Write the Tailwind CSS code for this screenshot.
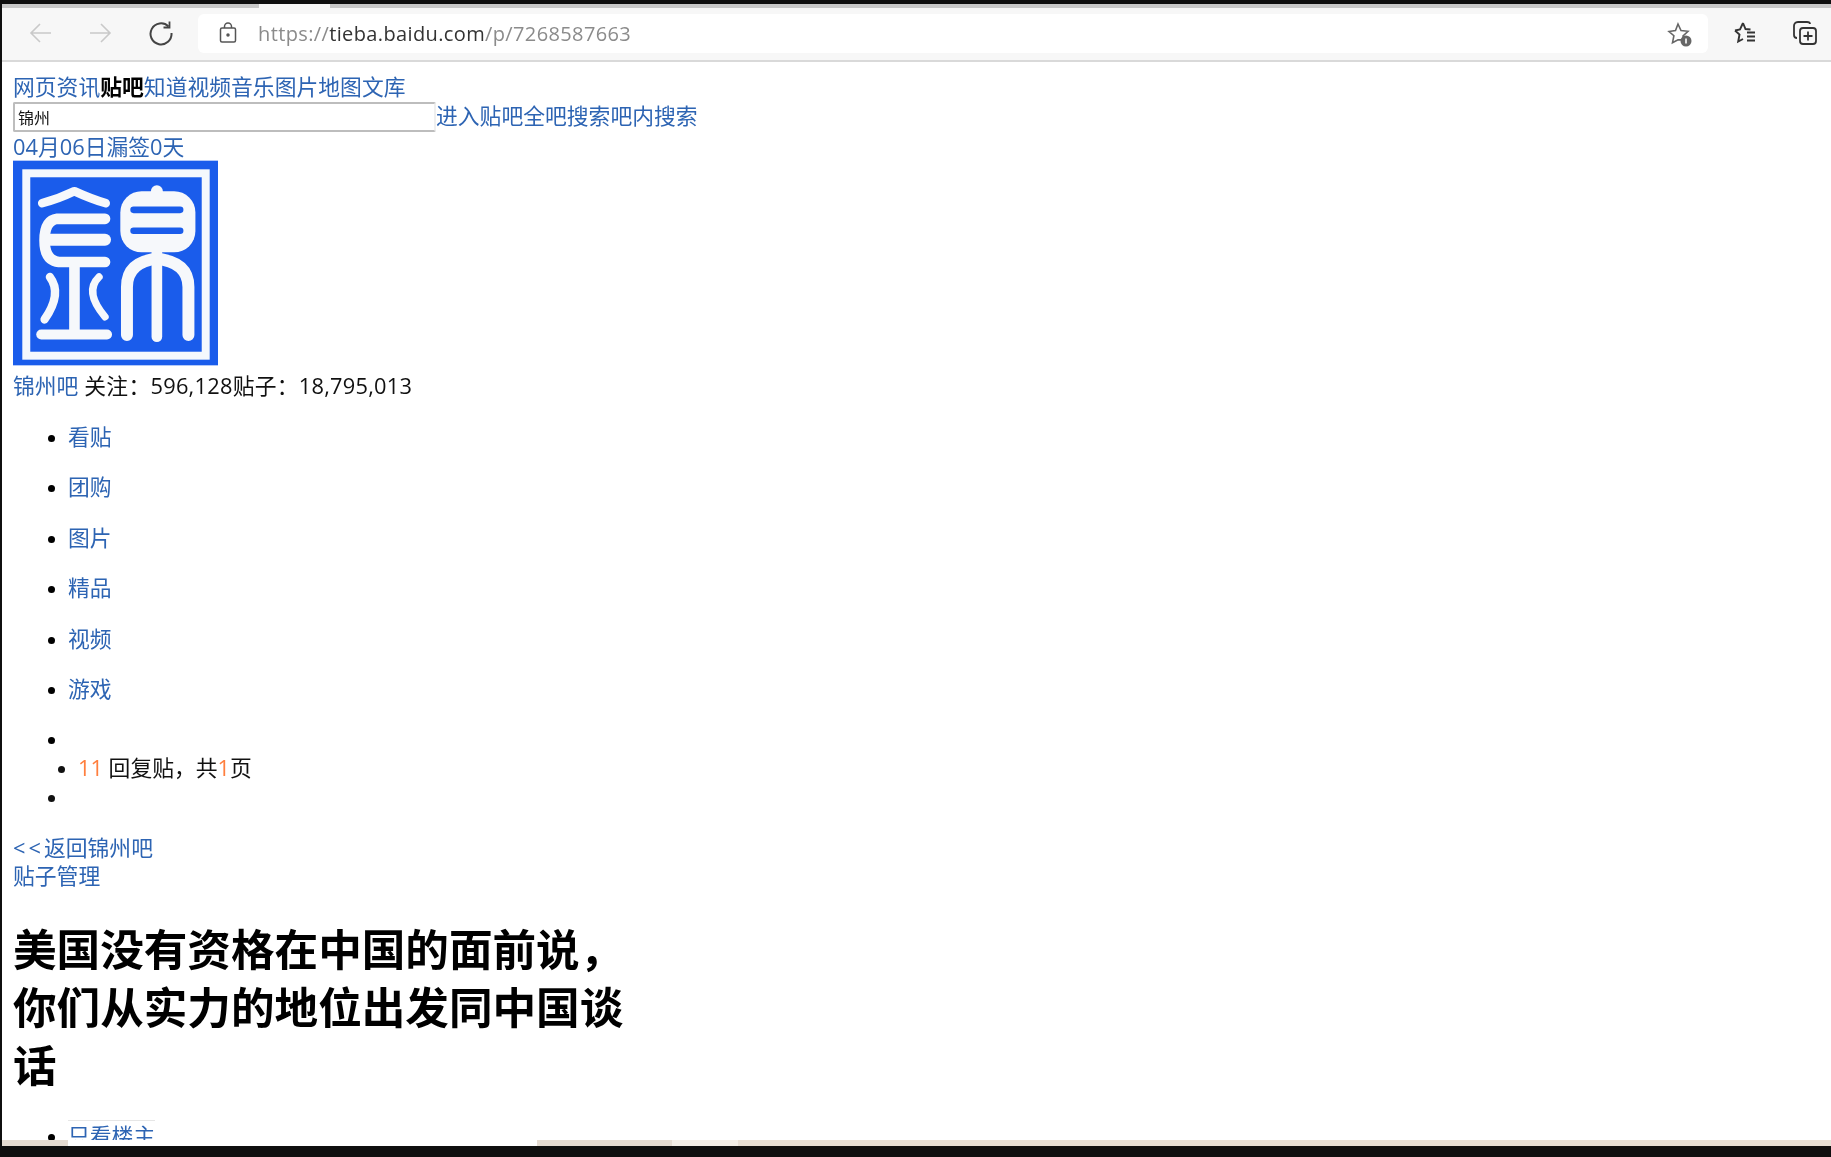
<!DOCTYPE html>
<html lang="zh-CN">
<head>
  <meta charset="UTF-8">
  <meta name="viewport" content="width=device-width, initial-scale=1.0">
  <title>锦州吧</title>
  <script src="https://cdn.jsdelivr.net/npm/@tailwindcss/browser@4"></script>
</head>
<body class="h-screen overflow-hidden bg-white flex flex-col border-l-2 border-[#0f0f0f] font-['Open_Sans','Noto_Sans_CJK_SC',sans-serif] text-[21.8px] leading-[29px] text-[#111] blur-[0.4px]">

  <!-- browser chrome -->
  <div class="h-1 bg-[#0f0f0f] shrink-0"></div>
  <div class="h-1 bg-[#c8c8c8] shrink-0 pl-[257px]"><div class="w-[71px] h-1 bg-[#f7f7f7]"></div></div>
  <div class="h-[54px] shrink-0 bg-[#f7f7f7] border-b-2 border-[#d9d9d9] flex items-center pb-[2px]">
    <div class="w-[196px] flex items-center shrink-0">
      <svg class="ml-[27px]" width="24" height="24" viewBox="0 0 24 24" fill="none" stroke="#c9c9c9" stroke-width="1.6"><path d="M22 12H2M11 3l-9 9 9 9"/></svg>
      <svg class="ml-[35px]" width="24" height="24" viewBox="0 0 24 24" fill="none" stroke="#c9c9c9" stroke-width="1.6"><path d="M2 12h20M13 3l9 9-9 9"/></svg>
      <svg class="ml-[36px]" width="26" height="26" viewBox="0 0 26 26" fill="none" stroke="#444" stroke-width="2"><path d="M20.500 6.500A10.500 10.500 0 1 0 23.500 13"/><path d="M21.500 1.500v6h-6" stroke-width="1.800"/></svg>
    </div>
    <div class="flex-1 h-[39px] bg-white rounded-md flex items-center relative">
      <svg class="ml-[20px]" width="20" height="22" viewBox="0 0 20 22" fill="none" stroke="#555" stroke-width="1.500"><rect x="2.500" y="6" width="15" height="14" rx="1.500"/><path d="M6.500 6V4.500a3.500 3.500 0 0 1 7 0V6"/><circle cx="10" cy="13" r="1" fill="#555"/></svg>
      <span class="ml-[20px] font-['Open_Sans',sans-serif] text-[20px] text-[#8b8b8b] tracking-[0.37px]">https://<span class="text-[#333]">tieba.baidu.com</span>/p/7268587663</span>
      <svg class="absolute right-[14px] top-[7px]" width="28" height="28" viewBox="0 0 28 28" fill="none" stroke="#666" stroke-width="1.600"><path d="M12 3l3 6.500 7 .8-5 4.600 1 4-6-.2-5.500 3 1.400-7L3 10.500l6.500-1z"/><circle cx="20" cy="20" r="5.500" fill="#666" stroke="none"/><path d="M20 17.500v5" stroke="#fff"/></svg>
    </div>
    <div class="w-[123px] flex items-center shrink-0">
      <svg class="ml-[24px]" width="26" height="26" viewBox="0 0 26 26" fill="none" stroke="#333" stroke-width="1.900"><path d="M11 3l2.500 6 5 .5M3 10.500l5-1L11 3M3 10.500l4.500 4-1.300 7L11 19"/><path d="M15 12.500h8M15 16.500h8M15 20.500h8"/></svg>
      <svg class="ml-[34px]" width="26" height="26" viewBox="0 0 26 26" fill="none" stroke="#333" stroke-width="1.800"><path d="M5 18c-2 0-3-1-3-3V6c0-2 1-4 4-4h9c2 0 3 1 3 2"/><rect x="8" y="8" width="16" height="16" rx="3"/><path d="M16 11.500v9M11.500 16h9"/></svg>
    </div>
  </div>

  <!-- page content -->
  <main class="flex-1 min-h-0 overflow-hidden pl-[11px] pt-[10px]">
    <div class="text-[#2d64b3] h-[30px]"><a href="#">网页</a><a href="#">资讯</a><b class="font-bold text-black">贴吧</b><a href="#">知道</a><a href="#">视频</a><a href="#">音乐</a><a href="#">图片</a><a href="#">地图</a><a href="#">文库</a></div>
    <div class="flex items-start h-[30px] text-[#2d64b3] leading-[27px]">
      <input value="锦州" class="w-[423px] h-[30px] px-[3px] text-[16px] text-[#111] bg-white border-2 border-[#bdbdbd] border-r-[#efefef] rounded-[2px]">
      <a href="#">进入贴吧</a><a href="#">全吧搜索</a><a href="#">吧内搜索</a>
    </div>
    <div class="text-[#2d64b3] h-[28px] leading-[29px]"><a href="#">04月06日漏签0天</a></div>

    <svg class="block" width="205" height="206" viewBox="37 30 617 616">
      <rect x="37" y="30" width="617" height="616" fill="#1a5ceb"/>
      <rect x="77" y="68" width="540" height="549" fill="none" stroke="#f4f8fd" stroke-width="24"/>
      <g fill="none" stroke="#f6f8fb" stroke-linecap="round" stroke-linejoin="round">
        <path d="M125 158Q175 145 222 122Q272 145 316 158" stroke-width="26"/>
        <path d="M314 205H170Q132 210 132 270Q132 330 175 335H314" stroke-width="32"/>
        <path d="M150 268H314" stroke-width="36"/>
        <path d="M222 340V550" stroke-width="32"/>
        <path d="M122 553H320" stroke-width="30"/>
        <path d="M148 380Q186 430 132 508" stroke-width="25"/>
        <path d="M296 380Q250 425 314 500" stroke-width="22"/>
        <path d="M380 555V410Q380 335 470 325Q565 335 565 410V555" stroke-width="36"/>
        <path d="M470 290V560" stroke-width="32"/>
      </g>
      <rect x="360" y="122" width="226" height="184" rx="64" fill="#f6f8fb"/>
      <circle cx="470" cy="122" r="18" fill="#f6f8fb"/>
      <path d="M400 178H540M400 241H540" stroke="#1a5ceb" stroke-width="20" stroke-linecap="round"/>
    </svg>

    <div class="mt-[5px] h-[29px] tracking-[0.25px]"><a href="#" class="text-[#2d64b3] tracking-normal">锦州吧</a> 关注：596,128贴子：18,795,013</div>

    <ul class="list-disc pl-[55px] mt-[22px] flex flex-col gap-[21.400px] text-[#2d64b3] marker:text-black marker:text-[19px]">
      <li class="h-[29px]"><a href="#">看贴</a></li>
      <li class="h-[29px]"><a href="#">团购</a></li>
      <li class="h-[29px]"><a href="#">图片</a></li>
      <li class="h-[29px]"><a href="#">精品</a></li>
      <li class="h-[29px]"><a href="#">视频</a></li>
      <li class="h-[29px]"><a href="#">游戏</a></li>
      <li class="h-[29px]">&nbsp;</li>
    </ul>
    <ul class="list-disc pl-[65px] marker:text-[19px]">
      <li class="h-[29px]"><span class="text-[#ff7f3e]">11</span> 回复贴，共<span class="text-[#ff7f3e]">1</span>页</li>
    </ul>
    <ul class="list-disc pl-[55px] marker:text-[19px]">
      <li class="h-[29px]">&nbsp;</li>
    </ul>

    <div class="mt-[22px] h-[28px] text-[#2d64b3]"><a href="#"><span class="tracking-[3px]">&lt;&lt;</span>返回锦州吧</a></div>
    <div class="h-[28px] text-[#2d64b3]"><a href="#">贴子管理</a></div>

    <h1 class="mt-[31px] w-[620px] text-[43.6px] leading-[58px] font-bold text-black">美国没有资格在中国的面前说，你们从实力的地位出发同中国谈话</h1>

    <ul class="list-disc pl-[55px] mt-[26px] text-[#2d64b3] marker:text-black marker:text-[19px]">
      <li><a href="#" class="inline-block border-t border-[#e6e6e6]">只看楼主</a></li>
    </ul>
  </main>

  <!-- strip of the window behind -->
  <div class="h-[6px] shrink-0 flex">
    <div class="w-[66px] bg-[#e5dcd2]"></div>
    <div class="w-[469px] bg-white"></div>
    <div class="w-[135px] bg-[#e5dcd2]"></div>
    <div class="w-[66px] bg-[#f3eee7]"></div>
    <div class="flex-1 bg-[#e8dfd4]"></div>
  </div>
  <div class="h-[11px] shrink-0 bg-[#0f0f0f]"></div>
</body>
</html>
